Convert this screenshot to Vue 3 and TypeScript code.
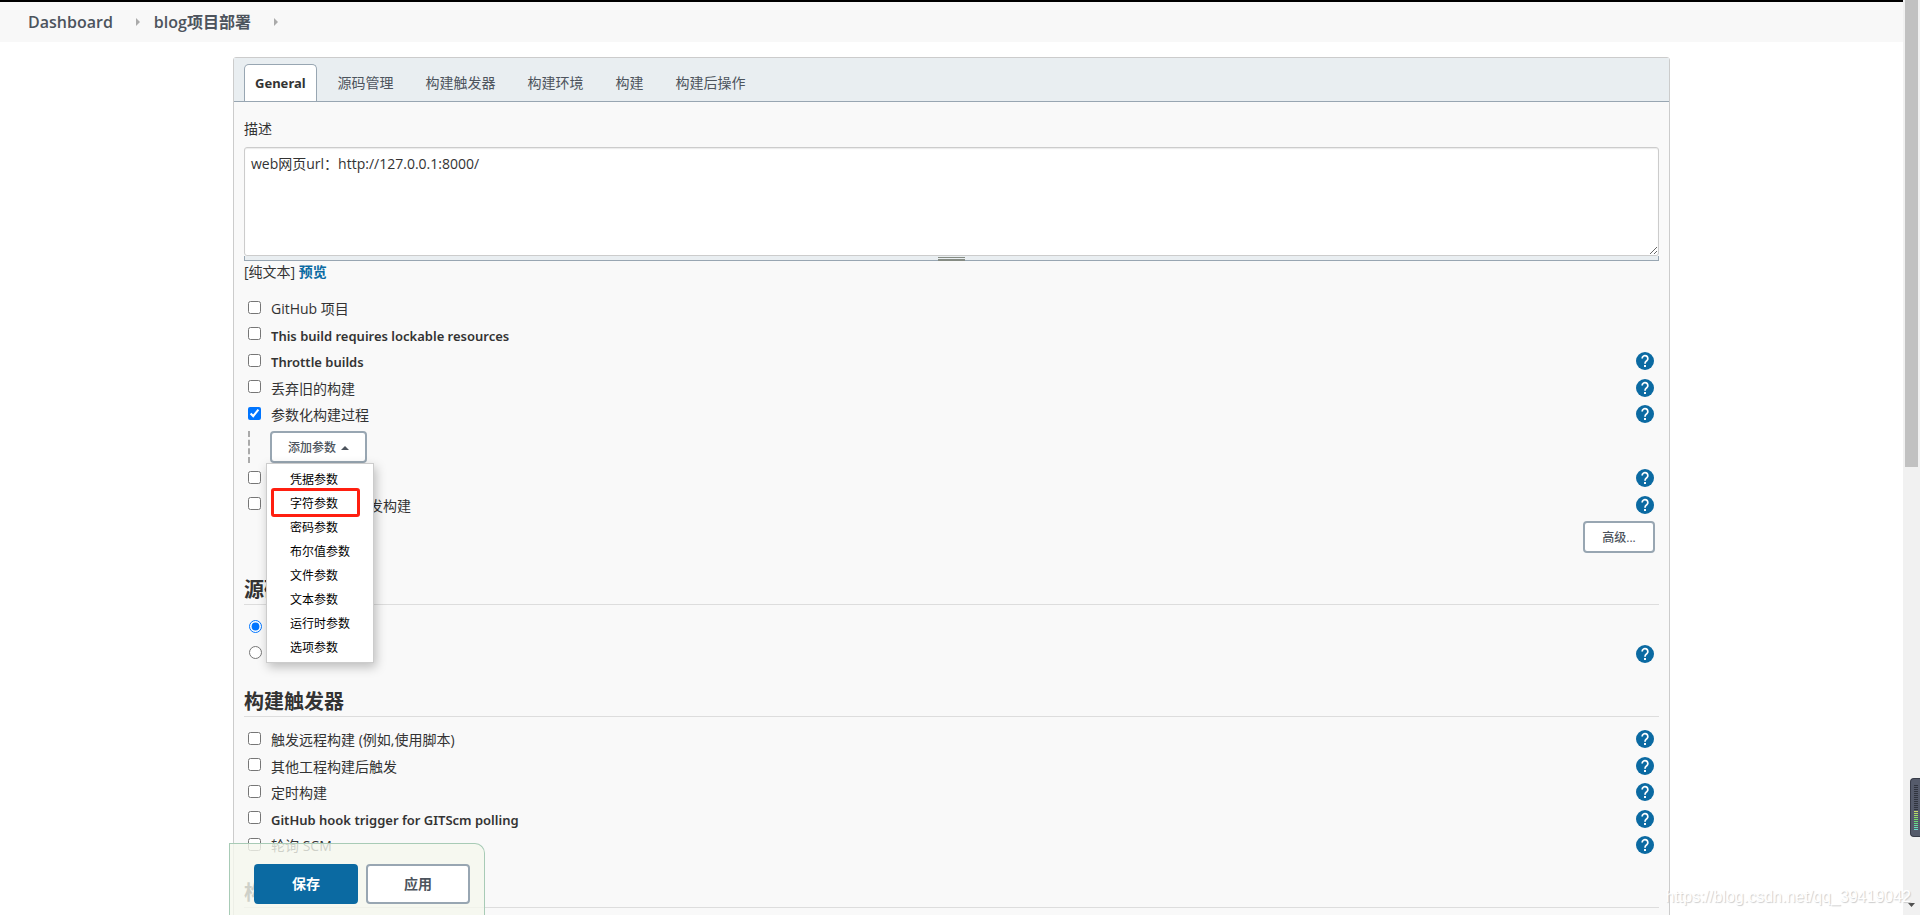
<script setup lang="ts">
import { ref } from 'vue'

interface Option {
  id: string
  label: string
  help: boolean
  checked?: boolean
}

const tabs: string[] = ['General', '源码管理', '构建触发器', '构建环境', '构建', '构建后操作']
const activeTab = ref('General')
const description = ref('web网页url：http://127.0.0.1:8000/')

const generalOptions = ref<Option[]>([
  { id: 'github', label: 'GitHub 项目', help: false },
  { id: 'lockable', label: 'This build requires lockable resources', help: false },
  { id: 'throttle', label: 'Throttle builds', help: true },
  { id: 'discard', label: '丢弃旧的构建', help: true },
  { id: 'parameterized', label: '参数化构建过程', help: true, checked: true },
])
const concurrencyOptions = ref<Option[]>([
  { id: 'disable', label: '关闭构建', help: true },
  { id: 'concurrent', label: '在必要的时候并发构建', help: true },
])
const scmOptions: Option[] = [
  { id: 'none', label: '无', help: false },
  { id: 'git', label: 'Git', help: true },
]
const scm = ref('none')
const triggers = ref<Option[]>([
  { id: 'remote', label: '触发远程构建 (例如,使用脚本)', help: true },
  { id: 'upstream', label: '其他工程构建后触发', help: true },
  { id: 'timer', label: '定时构建', help: true },
  { id: 'hook', label: 'GitHub hook trigger for GITScm polling', help: true },
  { id: 'poll', label: '轮询 SCM', help: true },
])

const parameterTypes: string[] = ['凭据参数', '字符参数', '密码参数', '布尔值参数', '文件参数', '文本参数', '运行时参数', '选项参数']
const highlighted = '字符参数'
const menuOpen = ref(true)

// Purely Latin labels carry a heavier weight; Chinese ones stay regular.
const isLatin = (label: string): boolean => /^[A-Za-z ]+$/.test(label)

const meterBars = 23
const litFrom = 14
const barColor = (n: number): string =>
  n < litFrom ? '#30343f' : `hsl(${70 + (n - litFrom) * 11}, 65%, 64%)`
</script>

<template>
  <div class="app">
    <svg class="sprite" aria-hidden="true">
      <symbol id="help-icon" viewBox="0 0 24 24">
        <circle cx="12" cy="12" r="12" fill="#0b6aa2" />
        <path d="M8.200 8.700a3.800 3.800 0 1 1 6.300 2.800c-1.500 1.300-2.500 1.900-2.500 4" fill="none" stroke="#fff" stroke-width="2.300" />
        <path d="M10.700 17.400h2.600v2.600h-2.600z" fill="#fff" />
      </symbol>
    </svg>

    <div class="viewport">
      <nav class="breadcrumbs" aria-label="Breadcrumb">
        <a href="#">Dashboard</a>
        <svg class="crumb-arrow" viewBox="0 0 4 8" aria-hidden="true"><path d="M0 0L4 4L0 8Z" /></svg>
        <a href="#">blog项目部署</a>
        <svg class="crumb-arrow" viewBox="0 0 4 8" aria-hidden="true"><path d="M0 0L4 4L0 8Z" /></svg>
      </nav>

      <main class="panel">
        <div class="tabs" role="tablist">
          <button
            v-for="tab in tabs"
            :key="tab"
            type="button"
            role="tab"
            class="tab"
            :class="{ active: tab === activeTab, latin: isLatin(tab) }"
            :aria-selected="tab === activeTab"
            @click="activeTab = tab"
          >{{ tab }}</button>
        </div>

        <form id="config" class="body" @submit.prevent>
          <label class="field-label" for="description">描述</label>
          <textarea id="description" v-model="description" class="description"></textarea>
          <div class="grip"><span class="grip-handle"></span></div>
          <p class="format">[纯文本] <a href="#">预览</a></p>

          <div class="options">
            <div v-for="option in generalOptions" :key="option.id" class="option">
              <input :id="option.id" v-model="option.checked" type="checkbox">
              <label :for="option.id" :class="{ latin: isLatin(option.label) }">{{ option.label }}</label>
              <button v-if="option.help" type="button" class="help" :aria-label="'帮助 ' + option.label">
                <svg><use href="#help-icon" /></svg>
              </button>
            </div>
          </div>

          <div class="nested">
            <div class="dropdown">
              <button type="button" class="btn small" aria-haspopup="menu" :aria-expanded="menuOpen" @click="menuOpen = !menuOpen">
                添加参数
                <svg class="caret" viewBox="0 0 8 4" aria-hidden="true"><path d="M0 4L4 0L8 4Z" /></svg>
              </button>
              <ul v-if="menuOpen" class="menu" role="menu">
                <li v-for="type in parameterTypes" :key="type" role="none" :class="{ marked: type === highlighted }">
                  <a href="#" role="menuitem">{{ type }}</a>
                </li>
              </ul>
            </div>
          </div>

          <div class="options">
            <div v-for="option in concurrencyOptions" :key="option.id" class="option">
              <input :id="option.id" v-model="option.checked" type="checkbox">
              <label :for="option.id">{{ option.label }}</label>
              <button v-if="option.help" type="button" class="help" :aria-label="'帮助 ' + option.label">
                <svg><use href="#help-icon" /></svg>
              </button>
            </div>
          </div>
          <div class="advanced"><button type="button" class="btn small">高级...</button></div>

          <h2>源码管理</h2>
          <div class="options">
            <div v-for="option in scmOptions" :key="option.id" class="option">
              <input :id="option.id" v-model="scm" type="radio" name="scm" :value="option.id">
              <label :for="option.id">{{ option.label }}</label>
              <button v-if="option.help" type="button" class="help" :aria-label="'帮助 ' + option.label">
                <svg><use href="#help-icon" /></svg>
              </button>
            </div>
          </div>

          <h2>构建触发器</h2>
          <div class="options">
            <div v-for="option in triggers" :key="option.id" class="option">
              <input :id="option.id" v-model="option.checked" type="checkbox">
              <label :for="option.id" :class="{ latin: isLatin(option.label) }">{{ option.label }}</label>
              <button v-if="option.help" type="button" class="help" :aria-label="'帮助 ' + option.label">
                <svg><use href="#help-icon" /></svg>
              </button>
            </div>
          </div>

          <h2>构建环境</h2>
        </form>
      </main>
    </div>

    <div class="scrollbar" aria-hidden="true">
      <div class="thumb"></div>
      <svg class="scroll-down" viewBox="0 0 7 4"><path d="M0 0H7L3.500 4Z" /></svg>
    </div>

    <div class="actions">
      <button type="submit" form="config" class="btn primary">保存</button>
      <button type="button" class="btn">应用</button>
    </div>

    <div class="meter" aria-hidden="true">
      <i v-for="n in meterBars" :key="n" :style="{ background: barColor(n) }"></i>
    </div>
    <div class="watermark">https://blog.csdn.net/qq_39419042</div>
  </div>
</template>

<style>
body {
  margin: 0;
  overflow: hidden;
}
</style>

<style scoped>
* {
  box-sizing: border-box;
}

.app {
  position: relative;
  display: flex;
  height: 100vh;
  overflow: hidden;
  background: #fff;
  color: #333;
  font: 14px/20px "Open Sans", "Noto Sans CJK SC", sans-serif;
}

button,
textarea {
  font: inherit;
}

.sprite {
  position: absolute;
  width: 0;
  height: 0;
}

.viewport {
  flex: 1;
  min-width: 0;
  overflow: hidden;
  border-top: 2px solid #000;
}

.breadcrumbs {
  display: flex;
  align-items: center;
  height: 40px;
  padding: 0 28px;
  background: #f8f8f8;
  font-size: 16px;
  font-weight: 600;
}

.breadcrumbs a {
  color: #4d545d;
  text-decoration: none;
}

.crumb-arrow {
  width: 4px;
  height: 8px;
  margin: 0 14px 0 23px;
  fill: #aaa;
}

.panel {
  margin: 15px 233px 0;
  border: 1px solid #ccc;
  border-radius: 3px;
  background: #f9f9f9;
}

.tabs {
  display: flex;
  align-items: flex-end;
  gap: 10px;
  height: 44px;
  padding-left: 10px;
  border-bottom: 1px solid #98a6b2;
  background: #e9eef1;
}

.tab {
  height: 37px;
  padding: 0 10px;
  border: 1px solid transparent;
  border-bottom: 0;
  border-radius: 5px 5px 0 0;
  background: none;
  color: #4d545d;
}

.tab.active {
  border-color: #98a6b2;
  background: #fff;
  color: #333;
  font-weight: 700;
}

.latin {
  font-family: "Noto Sans", sans-serif;
  font-size: 13px;
}

.body {
  padding: 16px 10px 12px;
}

.field-label {
  display: block;
  height: 29px;
  line-height: 22px;
}

.description {
  display: block;
  width: 100%;
  height: 109px;
  padding: 6px;
  border: 1px solid #ccc;
  border-radius: 3px;
  background: #fff;
  color: #333;
  box-shadow: inset 0 1px 1px rgba(0, 0, 0, 0.08);
}

.grip {
  display: flex;
  justify-content: center;
  height: 5px;
  padding-top: 1px;
  border: 1px solid #98a6b2;
  border-top: 0;
  background: #e9eef1;
}

.grip-handle {
  width: 27px;
  height: 4px;
  border: solid #868c84;
  border-width: 1px 0 2px;
}

.format {
  margin: 0 0 12px;
  line-height: 22px;
}

.format a {
  color: #0b6aa2;
  font-weight: 600;
  text-decoration: none;
}

.option {
  display: flex;
  align-items: center;
  height: 26px;
  padding: 0 5px 0 4px;
}

.option:nth-child(even) {
  height: 27px;
}

.option input {
  width: 13px;
  height: 13px;
  margin: 0 10px 2px 0;
}

.option input[type="radio"] {
  margin: 0 9px 2px 1px;
}

.option label {
  padding-top: 2px;
}

.option .latin {
  font-weight: 600;
}

.help {
  display: flex;
  width: 18px;
  height: 18px;
  margin-left: auto;
  padding: 0;
  border: 0;
  background: none;
}

.help svg {
  width: 18px;
  height: 18px;
}

.nested {
  margin: 4px 4px 2px;
  padding-left: 20px;
  border-left: 2px dashed #aaa;
}

.dropdown {
  position: relative;
  width: max-content;
}

.btn {
  width: 104px;
  height: 40px;
  padding: 0 16px;
  border: 2px solid #98a6b2;
  border-radius: 4px;
  background: #fff;
  color: #4d545d;
  font-weight: 600;
}

.btn.primary {
  border-color: #0b6aa2;
  background: #0b6aa2;
  color: #fff;
}

.btn.small {
  display: flex;
  align-items: center;
  justify-content: center;
  gap: 5px;
  width: auto;
  min-width: 72px;
  height: 32px;
  padding-top: 2px;
  font-size: 12px;
  font-weight: 500;
}

.caret {
  width: 8px;
  height: 4px;
  fill: #4d545d;
}

.menu {
  position: absolute;
  z-index: 2;
  top: 100%;
  left: -4px;
  width: 108px;
  margin: 0;
  padding: 4px 3px 2px;
  border: 1px solid #ccc;
  background: #fff;
  box-shadow: 2px 4px 10px rgba(0, 0, 0, 0.25);
  list-style: none;
}

.menu li {
  position: relative;
  height: 24px;
  padding-left: 20px;
  font-size: 12px;
  line-height: 24px;
}

.menu a {
  color: #000;
  text-decoration: none;
}

.marked::after {
  content: "";
  position: absolute;
  inset: -4px 10px -1px 1px;
  border: 3px solid #ff1f10;
  border-radius: 3px;
}

.advanced {
  display: flex;
  justify-content: flex-end;
  margin: 3px 4px 2px;
}

h2 {
  height: 50px;
  margin: 0 0 9px;
  padding-top: 20px;
  border-bottom: 1px solid #ddd;
  font-size: 20px;
  font-weight: 700;
  line-height: 30px;
}

.scrollbar {
  display: flex;
  flex-direction: column;
  align-items: center;
  justify-content: space-between;
  width: 17px;
  background: #f1f1f1;
}

.thumb {
  width: 13px;
  height: 51%;
  background: #c1c1c1;
}

.scroll-down {
  width: 7px;
  height: 4px;
  margin-bottom: 8px;
  fill: #505050;
}

.actions {
  position: absolute;
  z-index: 1;
  bottom: 0;
  left: 229px;
  display: flex;
  gap: 8px;
  height: 72px;
  padding: 20px 14px 0 24px;
  border: 1px solid #a8cbb6;
  border-bottom: 0;
  border-radius: 0 10px 0 0;
  background: rgba(245, 247, 238, 0.8);
}

.meter {
  position: absolute;
  z-index: 2;
  right: 0;
  bottom: 78px;
  display: flex;
  flex-direction: column;
  gap: 1px;
  width: 10px;
  padding: 6px 2px 6px 3px;
  border: 1px solid #383c49;
  border-right: 0;
  border-radius: 4px 0 0 4px;
  background: #555b6b;
}

.meter i {
  height: 1px;
}

.watermark {
  position: absolute;
  z-index: 3;
  right: 9px;
  bottom: 8px;
  color: #fff;
  font: 16px/20px "Liberation Sans", sans-serif;
  text-shadow: 1px 1px 1px #ccc;
  pointer-events: none;
}
</style>
